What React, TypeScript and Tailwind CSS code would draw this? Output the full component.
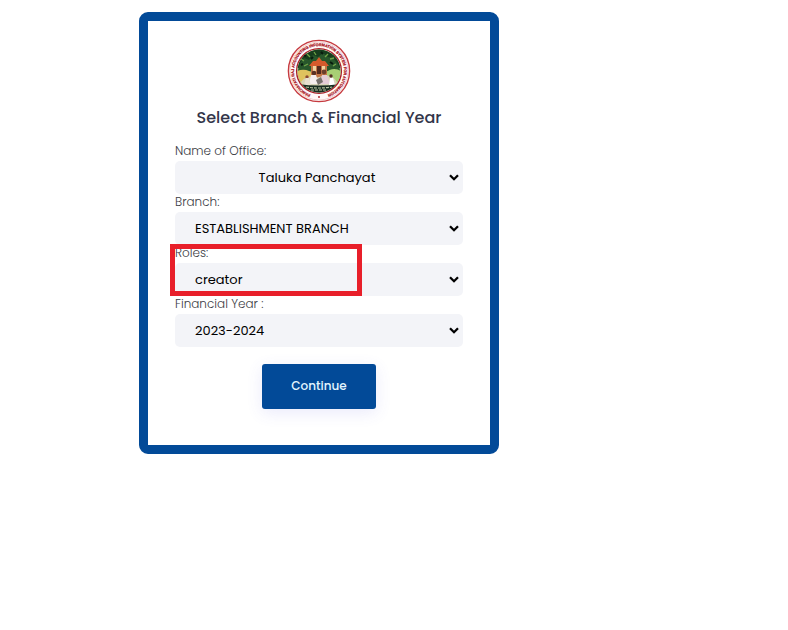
import { useId } from "react";

type FieldProps = {
  label: string;
  value: string;
  centered?: boolean;
  highlighted?: boolean;
};

function Field({ label, value, centered = false, highlighted = false }: FieldProps) {
  const id = useId();
  return (
    <div className="relative flex flex-col">
      <label htmlFor={id} className="h-[18px] text-xs leading-4 font-light text-[#3c3d45]">
        {label}
      </label>
      <div className="relative">
        <select
          id={id}
          defaultValue={value}
          className={
            "block h-[33px] w-full appearance-none rounded-[5px] bg-[#f3f4f8] pr-6 pl-5 text-[13px] leading-5 text-black " +
            (centered ? "[text-align-last:center]" : "")
          }
        >
          <option value={value}>{value}</option>
        </select>
        <svg
          viewBox="0 0 10 7"
          aria-hidden="true"
          className="pointer-events-none absolute top-[13px] right-1 h-[7px] w-[10px]"
        >
          <path d="M1 1.2 L5 5.2 L9 1.2" fill="none" stroke="#000" strokeWidth="2.3" />
        </svg>
      </div>
      {highlighted && (
        <div className="pointer-events-none absolute -top-px -left-[5px] h-[52px] w-48 border-5 border-[#e81f2a]" />
      )}
    </div>
  );
}

function Seal() {
  return (
    <svg viewBox="0 0 64 64" role="img" aria-label="Panchayati Raj seal" className="size-16">
      <defs>
        <path id="seal-ring" d="M27 56.5 A25 25 0 1 1 37 56.5" />
        <clipPath id="seal-scene">
          <circle cx="32" cy="32" r="21.5" />
        </clipPath>
      </defs>
      <circle cx="32" cy="32" r="30.6" fill="#fff8f7" stroke="#c63b40" strokeWidth="1.4" />
      <circle cx="32" cy="32" r="29" fill="none" stroke="#e3a5a5" strokeWidth="0.5" />
      <text
        fill="#a9141d"
        stroke="#a9141d"
        strokeWidth="0.25"
        fontSize="3.8"
        fontWeight="700"
        fontFamily="'Liberation Sans', sans-serif"
      >
        <textPath href="#seal-ring" startOffset="50%" textAnchor="middle">
          PANCHAYATI RAJ ACCOUNTING INFORMATION SYSTEM FOR AUTOMATION
        </textPath>
      </text>
      <circle cx="32" cy="58" r="0.9" fill="#a9141d" />
      <circle cx="32" cy="32" r="22.4" fill="#fff" stroke="#a9222a" strokeWidth="1.4" />
      <g clipPath="url(#seal-scene)">
        <rect x="10" y="10" width="44" height="44" fill="#69a45e" />
        <rect x="10" y="10" width="44" height="19" fill="#173d1d" />
        <path d="M13 24 l4-5 5 2 4-5 5 2 5-4 5 4 5 1 5 6 2 7 H11z" fill="#28572b" />
        <path d="M14 20 l3 2 M20 15 l3 3 M27 13 l2 3 M41 15 l-3 3 M47 19 l-4 1 M49 25 l-3 2 M17 27 l4-2" stroke="#70a548" strokeWidth="1.3" />
        <path d="M17 16 l2 1 M24 20 l2-2 M34 13 l2 2 M43 23 l3 2 M14 26 l2-1" stroke="#071b0d" strokeWidth="2" />
        <path d="M10 32 Q20 28 27 36 L25 45 H10z" fill="#dfc25e" />
        <path d="M38 34 Q46 27 54 32 V45 H39z" fill="#a8cf74" />
        <path d="M24 25 h16 v15 H24z" fill="#c27445" />
        <path d="M22 27 l4-5 h3 l3-4 3 4 h3 l4 5z" fill="#d55a2c" />
        <path d="M26 27 h3 v8 h-3z M35 27 h3 v8 h-3z" fill="#f2d3a0" />
        <path d="M30 27 h4 v8 h-4z" fill="#52291e" />
        <path d="M14 43 Q20 35 28 39 L36 37 Q45 35 50 43 L48 48 H16z" fill="#d9d4b8" />
        <circle cx="27" cy="34" r="2.3" fill="#5b3225" />
        <path d="M22 45 l2-9 h5 l3 9z" fill="#f6eeee" />
        <circle cx="37" cy="33" r="2.4" fill="#6b3e2b" />
        <path d="M33 45 l2-9 h5 l3 9z" fill="#e4ccd6" />
        <circle cx="20" cy="38" r="1.7" fill="#8a4730" />
        <path d="M17 46 l2-7 h3 l2 7z" fill="#e8dfd0" />
        <circle cx="44" cy="37" r="1.7" fill="#543127" />
        <path d="M42 46 l1-7 h3 l2 7z" fill="#ffffff" />
        <path d="M29 41 l5-3 2 5 -5 3z" fill="#77706c" />
        <path d="M11 45 Q32 48 53 45 V54 H11z" fill="#182c20" />
        <path d="M19 48 Q32 50 45 48 M24 51 h16" fill="none" stroke="#b9c4a0" strokeWidth="1.2" strokeDasharray="3 1" />
      </g>
    </svg>
  );
}

export default function App() {
  return (
    <main className="min-h-screen bg-white px-4 pt-3 pb-8 font-[Poppins,Inter,sans-serif] sm:pl-[139px]">
      <form
        onSubmit={(event) => event.preventDefault()}
        className="flex w-full max-w-[360px] flex-col rounded-[9px] border-[9px] border-[#024a98] bg-white px-[27px] pt-[18px] pb-9"
      >
        <div className="flex flex-col items-center">
          <Seal />
          <h1 className="mt-[3px] text-center text-base leading-6 font-medium whitespace-nowrap text-[#33364a]">
            Select Branch &amp; Financial Year
          </h1>
        </div>
        <div className="mt-[13px] flex flex-col">
          <Field label="Name of Office:" value="Taluka Panchayat" centered />
          <Field label="Branch:" value="ESTABLISHMENT BRANCH" />
          <Field label="Roles:" value="creator" highlighted />
          <Field label="Financial Year :" value="2023-2024" />
        </div>
        <button
          type="submit"
          className="mt-[17px] h-[45px] w-[114px] self-center rounded-[3px] bg-[#024a98] pb-0.5 text-xs font-medium text-[#e4f6ff] shadow-[0_4px_16px_rgba(80,80,220,0.12)]"
        >
          Continue
        </button>
      </form>
    </main>
  );
}
